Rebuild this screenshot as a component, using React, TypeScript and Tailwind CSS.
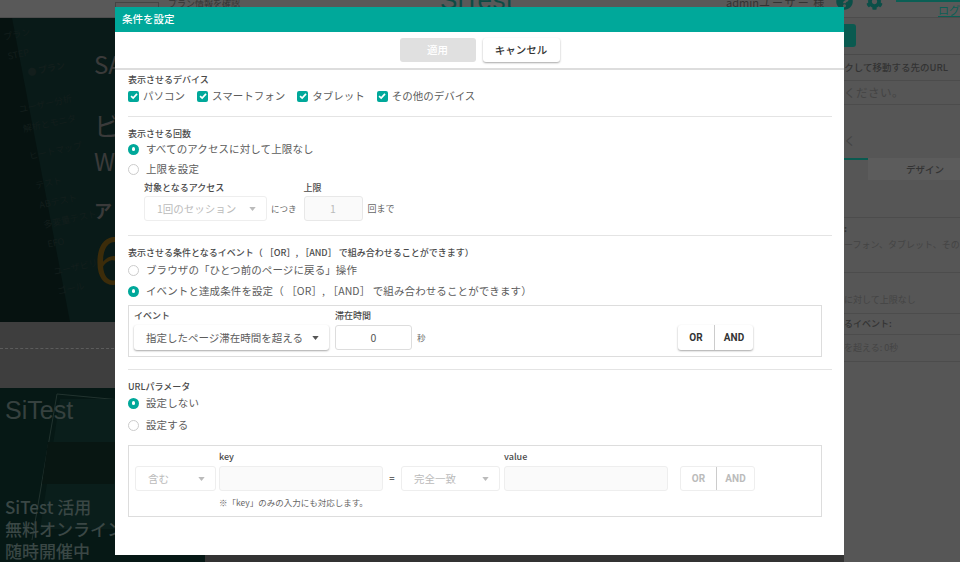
import React from 'react'
import { FaCog, FaQuestionCircle } from 'react-icons/fa'

const font = { fontFamily: '"Noto Sans CJK JP", "Noto Sans", sans-serif' }
const roboto = { fontFamily: 'Roboto, sans-serif' }
const logo = { fontFamily: '"Liberation Sans", sans-serif' }

const Label = ({ children, className = '' }: { children: React.ReactNode; className?: string }) => (
  <p className={`text-[9px] leading-[12px] font-medium text-[#4a4a4a] whitespace-nowrap ${className}`}>{children}</p>
)

const Check = ({ label }: { label: string }) => (
  <label className="flex items-center gap-[4px]">
    <span className="flex size-[11px] items-center justify-center rounded-[2px] bg-[#00a89a]">
      <svg viewBox="0 0 12 12" className="size-[10px]" fill="none" stroke="#fff" strokeWidth="2">
        <path d="M2.5 6.2 5 8.6l4.6-5.2" />
      </svg>
    </span>
    <span className="text-[10.5px] leading-[14px] text-[#5c5c5c] whitespace-nowrap">{label}</span>
  </label>
)

const Radio = ({ label, on = false }: { label: React.ReactNode; on?: boolean }) => (
  <label className="flex items-center gap-[7px]">
    {on ? (
      <span className="flex size-[11px] items-center justify-center rounded-full bg-[#00a89a]">
        <span className="size-[3.5px] rounded-full bg-white" />
      </span>
    ) : (
      <span className="size-[11px] rounded-full border border-[#ccc] bg-white" />
    )}
    <span className="text-[10.5px] leading-[14px] tracking-[0.1px] text-[#5c5c5c] whitespace-pre">{label}</span>
  </label>
)

const Caret = ({ color = '#555' }: { color?: string }) => (
  <svg viewBox="0 0 8 5" className="h-[4px] w-[7px]" fill={color}>
    <path d="M0 0h8L4 5z" />
  </svg>
)

const DisabledSelect = ({ text, className }: { text: string; className: string }) => (
  <div className={`flex h-[25px] items-center justify-between rounded-[3px] border border-[#eee] bg-white pl-[12px] pr-[10px] ${className}`}>
    <span className="text-[10.5px] text-[#bbb] whitespace-nowrap">{text}</span>
    <Caret color="#bbb" />
  </div>
)

const Divider = () => <div className="h-px w-[704px] bg-[#e4e4e4]" />

const Background = () => (
  <div className="flex h-full w-full flex-col bg-[#565656]">
    {/* top bar */}
    <div className="flex h-[18px] shrink-0 items-start overflow-hidden border-b border-[#4c4c4c] bg-[#595959] pl-[115px]">
      <span className="mt-[2px] h-[12px] w-[44px] shrink-0 border border-[#444]" />
      <span className="ml-[9px] mt-[-3px] w-[272px] shrink-0 text-[9px] text-[#333] whitespace-nowrap">プラン情報を確認</span>
      <span className="mt-[-12px] w-[286px] shrink-0 text-[26px] leading-[24px] tracking-[0.5px] text-[#0d4a44] whitespace-nowrap" style={logo}>
        SiTest
      </span>
      <span className="mt-[-5px] w-[110px] shrink-0 text-[11px] leading-[14px] text-[#333] whitespace-nowrap">
        admin<span className="tracking-[2px]">ユーザー</span> 様
      </span>
      <FaQuestionCircle className="mt-[-7px] size-[17px] shrink-0 text-[#0b4f48]" />
      <FaCog className="ml-[13px] mt-[-7px] size-[17px] shrink-0 text-[#0b4f48]" />
      <div className="ml-[13px] flex w-[64px] shrink-0 flex-col">
        <span className="h-[2px] w-full bg-[#0b5f55]" />
        <span className="ml-[42px] mt-[1px] text-[11px] leading-[14px] text-[#0b5f55] underline whitespace-nowrap">ログ</span>
      </div>
    </div>

    <div className="flex min-h-0 flex-1">
      {/* left side: landing page behind the overlay */}
      <div className="flex w-[205px] shrink-0 flex-col">
        <div className="relative h-[304px] overflow-hidden bg-[#061210] pl-[94px] pt-[34px] text-[#3a3a3a]">
          <svg className="absolute inset-0 h-full w-full" viewBox="0 0 205 304" preserveAspectRatio="none">
            <path d="M12 0h193v304H70z" fill="#091a18" />
          </svg>
          <div className="absolute left-[30px] top-[4px] flex -rotate-[12deg] flex-col gap-[8px] text-[9px] leading-[12px] text-[#131e1c] whitespace-nowrap">
            <span>プラン</span>
            <span>STEP</span>
            <span className="ml-[16px] font-bold">● プラン</span>
            <span className="mt-[14px]">ユーザー分析</span>
            <span>解析とモニタ</span>
            <span className="mt-[8px]">ヒートマップ</span>
            <span className="mt-[10px]">テスト</span>
            <span>ABテスト</span>
            <span>多変量テスト</span>
            <span>EFO</span>
            <span className="mt-[8px]">ユーザビリティ</span>
            <span>ゴール</span>
          </div>
          <div className="relative flex flex-col" style={font}>
            <span className="text-[24px] leading-[24px]">SA</span>
            <span className="mt-[34px] text-[26px] leading-[30px]">ビ</span>
            <span className="mt-[6px] text-[24px] leading-[30px]">W</span>
            <span className="mt-[22px] text-[18px] leading-[24px] font-bold">ア</span>
            <span className="mt-[-2px] text-[64px] leading-[72px] text-[#3c2c0a]">6</span>
          </div>
        </div>
        <div className="flex h-[66px] flex-col bg-[#3e3e3e]">
          <div className="mt-[26px] border-t border-dashed border-[#5c5c5c]" />
        </div>
        <div className="relative flex-1 overflow-hidden bg-[#061815] pl-[5px] pt-[7px]" style={font}>
          <svg className="absolute left-[30px] top-[2px] h-[160px] w-[175px]" viewBox="0 0 175 160" fill="none">
            <path d="M27 4 175 18M27 4 2 150" stroke="#22332f" strokeWidth="1" />
            <path d="M30 9h145v130H10z" fill="#0a1e1b" />
            <path d="M18 52h70l-4 42H12z" fill="#081612" />
          </svg>
          <div className="relative text-[25px] leading-[30px] text-[#36413f]" style={logo}>
            SiTest
          </div>
          <div className="relative mt-[71px] text-[17px] leading-[22px] font-medium text-[#3a4745] whitespace-nowrap">
            <p>SiTest 活用</p>
            <p>無料オンライン</p>
            <p>随時開催中</p>
          </div>
        </div>
      </div>

      {/* center, hidden by the modal */}
      <div className="h-[174px] flex-1 self-end bg-[#333]" />

      {/* right panel */}
      <div className="flex w-[116px] shrink-0 flex-col overflow-hidden text-[#333] whitespace-nowrap" style={font}>
        <div className="h-[37px] shrink-0 border-b border-[#4a4a4a] pt-[6px]">
          <div className="h-[23px] w-[12px] rounded-r-[3px] bg-[#0a5a50]" />
        </div>
        <div className="flex h-[26px] shrink-0 items-center justify-end border-b border-[#4c4c4c] pr-[12px] text-[9.5px] font-medium">
          ックして移動する先のURL
        </div>
        <div className="flex h-[24px] shrink-0 items-center border-b border-[#4c4c4c] text-[11.5px] tracking-[0.5px] text-[#444]">ください。</div>
        <div className="flex h-[53px] shrink-0 items-end pb-[9px] text-[11.5px] text-[#444]">く</div>
        <div className="flex h-[30px] shrink-0">
          <div className="h-[2px] w-[24px] bg-[#0a5a50]" />
          <div className="flex h-[22px] flex-1 items-center justify-center bg-[#5c5c5c] pl-[22px] text-[9.5px] font-medium">デザイン</div>
        </div>
        <div className="h-[30px] shrink-0 border-b border-[#4c4c4c]" />
        <div className="h-[55px] shrink-0 border-b border-[#4c4c4c] pt-[4px] text-[9px] leading-[14px] text-[#444]">
          <p className="font-bold text-[#333]">:</p>
          <p className="mt-[2px]">ーフォン、タブレット、その</p>
        </div>
        <div className="flex h-[41px] shrink-0 items-end border-b border-[#4c4c4c] pb-[6px] text-[9px] leading-[14px] text-[#444]">に対して上限なし</div>
        <div className="flex h-[21px] shrink-0 items-center border-b border-[#4c4c4c] text-[9px] font-medium">るイベント:</div>
        <div className="flex h-[27px] shrink-0 items-center border-b border-[#4c4c4c] text-[9px] text-[#444]">を超える: 0秒</div>
      </div>
    </div>
  </div>
)

const App = () => {
  return (
    <div className="relative h-[562px] w-[960px] overflow-hidden" style={font}>
      <Background />

      {/* modal */}
      <div className="absolute left-[115px] top-[7px] flex h-[548px] w-[729px] flex-col bg-white">
        <div className="flex h-[25px] shrink-0 items-center bg-[#00a89a] pb-[1px] pl-[7px] text-[10.5px] font-medium text-white">条件を設定</div>

        <div className="flex h-[38px] shrink-0 items-start justify-center gap-[7px] border-b-2 border-[#ddd] pt-[6px]">
          <button className="h-[24px] w-[76px] rounded-[3px] bg-[#e0e0e0] text-[10.5px] font-medium text-white">適用</button>
          <button className="h-[24px] w-[77px] rounded-[3px] bg-white text-[10.5px] font-medium text-[#333] shadow-[0_1px_2px_rgba(0,0,0,0.35)]">キャンセル</button>
        </div>

        <div className="flex flex-col pl-[13px] pt-[4px]">
          {/* device */}
          <Label>表示させるデバイス</Label>
          <div className="mt-[3px] flex gap-[12px]">
            <Check label="パソコン" />
            <Check label="スマートフォン" />
            <Check label="タブレット" />
            <Check label="その他のデバイス" />
          </div>
          <div className="mt-[13px]"><Divider /></div>

          {/* count */}
          <Label className="mt-[11px]">表示させる回数</Label>
          <div className="mt-[2px] flex flex-col gap-[6px]">
            <Radio on label="すべてのアクセスに対して上限なし" />
            <Radio label="上限を設定" />
          </div>
          <div className="mt-[6px] flex pl-[16px]">
            <div className="flex flex-col gap-[2px]">
              <Label>対象となるアクセス</Label>
              <DisabledSelect text="1回のセッション" className="w-[123px]" />
            </div>
            <span className="ml-[4px] mt-[14px] text-[8.5px] leading-[25px] text-[#666] whitespace-nowrap">につき</span>
            <div className="ml-[7px] flex flex-col gap-[2px]">
              <Label>上限</Label>
              <div className="flex h-[25px] w-[59px] items-center justify-center rounded-[3px] border border-[#e8e8e8] bg-[#fafafa] text-[10.5px] text-[#bbb]">1</div>
            </div>
            <span className="ml-[5px] mt-[14px] text-[9px] leading-[25px] text-[#666] whitespace-nowrap">回まで</span>
          </div>
          <div className="mt-[14px]"><Divider /></div>

          {/* event */}
          <Label className="mt-[11px]">表示させる条件となるイベント（ ［OR］, ［AND］ で組み合わせることができます）</Label>
          <div className="mt-[4px] flex flex-col gap-[7px]">
            <Radio label="ブラウザの「ひとつ前のページに戻る」操作" />
            <Radio on label="イベントと達成条件を設定（ ［OR］, ［AND］ で組み合わせることができます）" />
          </div>
          <div className="mt-[7px] flex h-[52px] w-[694px] items-end border border-[#ddd] pb-[6px] pl-[5px] pr-[68px]">
            <div className="flex flex-col gap-[3px]">
              <Label>イベント</Label>
              <div className="flex h-[25px] w-[195px] items-center justify-between rounded-[3px] bg-white pl-[12px] pr-[10px] shadow-[0_1px_2px_rgba(0,0,0,0.35)]">
                <span className="text-[10.5px] text-[#5c5c5c] whitespace-nowrap">指定したページ滞在時間を超える</span>
                <Caret />
              </div>
            </div>
            <div className="ml-[6px] flex flex-col gap-[3px]">
              <Label>滞在時間</Label>
              <div className="flex h-[25px] w-[77px] items-center justify-center rounded-[3px] border border-[#ddd] text-[10.5px] text-[#555]">0</div>
            </div>
            <span className="ml-[5px] text-[8.5px] leading-[25px] text-[#666]">秒</span>
            <div className="ml-auto flex h-[25px] w-[75px] rounded-[3px] shadow-[0_1px_2px_rgba(0,0,0,0.35)]">
              <span className="flex w-[37px] items-center justify-center border-r border-[#ccc] text-[10px] font-bold text-[#333]" style={roboto}>OR</span>
              <span className="flex flex-1 items-center justify-center text-[10px] font-bold text-[#333]" style={roboto}>AND</span>
            </div>
          </div>
          <div className="mt-[12px]"><Divider /></div>

          {/* url parameter */}
          <Label className="mt-[11px]">URLパラメータ</Label>
          <div className="mt-[3px] flex flex-col gap-[8px]">
            <Radio on label="設定しない" />
            <Radio label="設定する" />
          </div>
          <div className="mt-[13px] flex h-[72px] w-[694px] flex-col border border-[#ddd] pl-[6px] pt-[5px]">
            <div className="flex items-end">
              <DisabledSelect text="含む" className="w-[81px]" />
              <div className="ml-[3px] flex flex-col gap-[3px]">
                <Label>key</Label>
                <div className="h-[25px] w-[164px] rounded-[3px] border border-[#eee] bg-[#fafafa]" />
              </div>
              <span className="w-[18px] text-center text-[9px] leading-[25px] font-bold text-[#666]">=</span>
              <DisabledSelect text="完全一致" className="w-[99px]" />
              <div className="ml-[4px] flex flex-col gap-[3px]">
                <Label>value</Label>
                <div className="h-[25px] w-[164px] rounded-[3px] border border-[#eee] bg-[#fafafa]" />
              </div>
              <div className="ml-[12px] flex h-[25px] w-[75px] rounded-[3px] border border-[#eee]">
                <span className="flex w-[36px] items-center justify-center border-r border-[#ccc] text-[10px] font-bold text-[#bbb]" style={roboto}>OR</span>
                <span className="flex flex-1 items-center justify-center text-[10px] font-bold text-[#bbb]" style={roboto}>AND</span>
              </div>
            </div>
            <p className="ml-[84px] mt-[5px] text-[8.5px] leading-[12px] text-[#666] whitespace-nowrap">※「key」のみの入力にも対応します。</p>
          </div>
        </div>
      </div>
    </div>
  )
}

export default App
